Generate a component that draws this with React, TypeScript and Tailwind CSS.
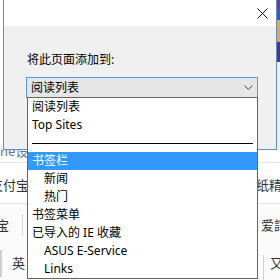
import React from "react";

type Item = { t?: string; indent?: boolean; sel?: boolean; sep?: boolean };

const items: Item[] = [
  { t: "阅读列表" },
  { t: "Top Sites" },
  { sep: true },
  { t: "书签栏", sel: true },
  { t: "新闻", indent: true },
  { t: "热门", indent: true },
  { t: "书签菜单" },
  { t: "已导入的 IE 收藏" },
  { t: "ASUS E-Service", indent: true },
  { t: "Links", indent: true },
];

export default function App() {
  return (
    <div className="relative w-[280px] h-[280px] overflow-hidden bg-white text-[12px] text-black font-['Noto_Sans','Noto_Sans_CJK_SC',sans-serif]">
      {/* underlying browser page */}
      <div className="flex flex-col h-full text-[13px] text-[#333]">
        <div className="h-[150px] shrink-0 flex justify-end">
          <div className="w-[3px] flex flex-col bg-[#f0f0f0]">
            <div className="h-[10px] bg-[#6b3d9c]" />
            <div className="h-[10px] bg-[#3f56b3]" />
            <div className="h-[22px] bg-[#eea43a]" />
            <div className="h-[20px] bg-[#5c2d8c]" />
          </div>
        </div>
        <div className="h-[13px] shrink-0 border-b border-[#e3e3e3] overflow-hidden flex items-start">
          <span className="-mt-[7px] leading-[16px] text-[#5b7894]">ne设</span>
        </div>
        <div className="h-[41px] shrink-0 border-b border-[#e3e3e3] overflow-hidden flex items-center pt-[4px]">
          <span className="-ml-[10px] shrink-0 leading-[16px]">支付宝</span>
          <div className="flex-1" />
          <span className="-mr-[15px] shrink-0 leading-[16px]">纸精选</span>
        </div>
        <div className="h-[42px] shrink-0 overflow-hidden flex items-center bg-[#fbfbfb]">
          <span className="-ml-[4px] shrink-0 leading-[16px]">宝</span>
          <div className="ml-[13px] w-px h-[22px] bg-[#d8d8d8]" />
          <div className="flex-1" />
          <span className="-mr-[7px] shrink-0 leading-[16px]">爱詞</span>
        </div>
        <div className="flex-1 overflow-hidden flex items-center bg-[#fbfbfb]">
          <div className="w-[2px] h-[27px] bg-[#cfcfcf] self-center" />
          <span className="ml-[10px] shrink-0 leading-[16px]">英</span>
          <div className="flex-1" />
          <div className="w-px h-[25px] bg-[#d0d0d0] self-end" />
          <span className="ml-[6px] -mr-[3px] shrink-0 leading-[16px]">又</span>
        </div>
      </div>

      {/* dialog window */}
      <div className="absolute left-[3px] top-0 w-[274px] h-[150px] border border-t-0 border-[#5e8fc6] bg-[#f0f0f0] flex flex-col">
        <div className="h-[26px] shrink-0 bg-white flex items-center justify-end pr-[8px]">
          <svg width="11" height="11" viewBox="0 0 11 11">
            <path d="M0.5 0.5 L10.5 10.5 M10.5 0.5 L0.5 10.5" stroke="#111" strokeWidth="1" fill="none" />
          </svg>
        </div>
        <div className="pl-[23px] pt-[26px] leading-[16px]">将此页面添加到:</div>
        <div className="ml-[22px] mt-[9px] w-[232px] h-[21px] border border-[#569de5] bg-[#e5e5e5] flex items-center justify-between pl-[4px] pr-[4px]">
          <span className="leading-[16px]">阅读列表</span>
          <svg width="9" height="6" viewBox="0 0 9 6">
            <path d="M0.5 0.5 L4.5 4.5 L8.5 0.5" stroke="#444" strokeWidth="1" fill="none" />
          </svg>
        </div>
      </div>

      {/* dropdown list */}
      <div className="absolute left-[27px] top-[97px] w-[231px] h-[182px] border border-[#646464] bg-white flex flex-col">
        {items.map((it, i) =>
          it.sep ? (
            <div key={i} className="h-[18px] shrink-0 flex items-center px-[4px]">
              <div className="w-full h-px bg-black" />
            </div>
          ) : (
            <div
              key={i}
              className={
                "h-[18px] shrink-0 flex items-center leading-[16px] " +
                (it.indent ? "pl-[16px] " : "pl-[4px] ") +
                (it.sel ? "bg-[#3399ff] text-white" : "text-black")
              }
            >
              {it.t}
            </div>
          )
        )}
      </div>
    </div>
  );
}
